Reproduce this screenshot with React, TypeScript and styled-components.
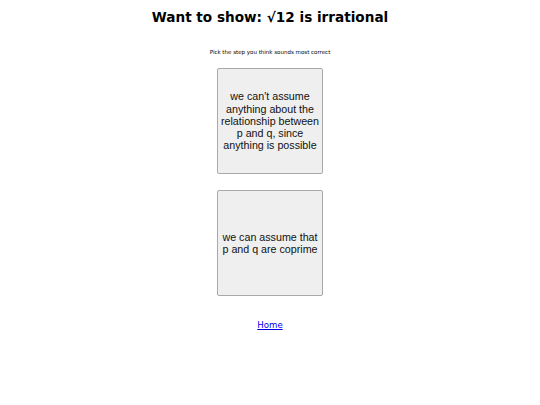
import { FC } from "react";
import styled, { createGlobalStyle } from "styled-components";

const GlobalStyle = createGlobalStyle`
  html, body {
    margin: 0;
    padding: 0;
    background: #ffffff;
  }
  body {
    font-family: "DejaVu Sans", sans-serif;
    color: #000000;
  }
`;

const Page = styled.div`
  display: flex;
  flex-direction: column;
  align-items: center;
  padding-top: 9px;
`;

const Title = styled.h1`
  margin: 0;
  font-size: 13.6px;
  font-weight: bold;
  line-height: 17px;
`;

const Hint = styled.p`
  margin: 23px 0 0;
  font-size: 5.5px;
  line-height: 7px;
`;

const Choices = styled.div`
  display: flex;
  flex-direction: column;
  gap: 16px;
  margin-top: 12px;
`;

const Choice = styled.button`
  width: 106px;
  height: 106px;
  padding: 1px;
  background: #efefef;
  border: 1px solid #a9a9a9;
  border-radius: 2px;
  font-family: "Liberation Sans", Arial, sans-serif;
  font-size: 10.7px;
  line-height: 12.3px;
  color: #111111;
  cursor: pointer;
`;

const HomeLink = styled.a`
  margin-top: 24px;
  font-size: 8.6px;
  color: #0000ee;
  text-decoration: underline;
`;

const steps = [
  "we can't assume anything about the relationship between p and q, since anything is possible",
  "we can assume that p and q are coprime",
];

const App: FC = () => {
  return (
    <>
      <GlobalStyle />
      <Page>
        <Title>Want to show: √12 is irrational</Title>
        <Hint>Pick the step you think sounds most correct</Hint>
        <Choices>
          {steps.map((step) => (
            <Choice key={step}>{step}</Choice>
          ))}
        </Choices>
        <HomeLink href="#">Home</HomeLink>
      </Page>
    </>
  );
};

export default App;
